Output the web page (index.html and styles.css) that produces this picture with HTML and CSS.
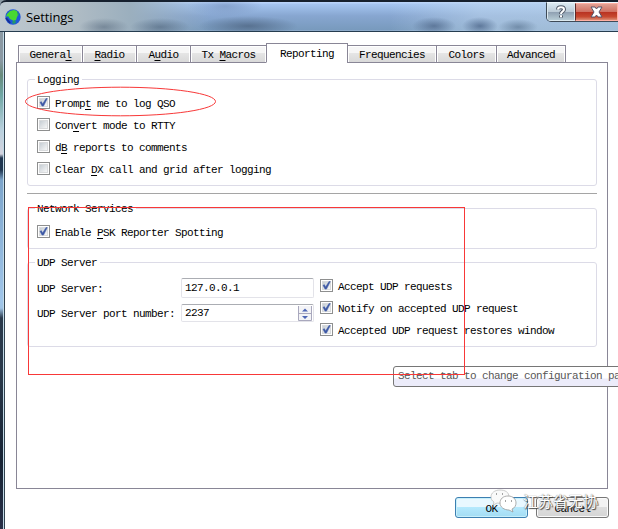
FILE: index.html
```html
<!DOCTYPE html>
<html lang="en">
<head>
<meta charset="utf-8">
<title>Settings</title>
<link rel="stylesheet" href="styles.css">
</head>
<body>
<svg class="defs" width="0" height="0" aria-hidden="true">
  <defs>
    <linearGradient id="fill" x1="0" y1="0" x2="1" y2="1"><stop offset="0" stop-color="#c3cbd2"/><stop offset="1" stop-color="#fafafa"/></linearGradient>
    <symbol id="box" viewBox="0 0 13 13"><rect x=".5" y=".5" width="12" height="12" fill="#fff" stroke="#8e8f8f"/><rect x="2.5" y="2.5" width="8" height="8" fill="url(#fill)" stroke="#d8dadc"/></symbol>
    <symbol id="checked" viewBox="0 0 13 13"><use href="#box"/><path d="M3 6.2l1.5-.5L5.6 8 9 2.5l1.3.1-3.8 7.5H5z" fill="#3d58a5" stroke="#3d58a5" stroke-width=".5"/></symbol>
  </defs>
</svg>
<div class="window">
  <header class="titlebar">
    <svg class="globe" width="16" height="16" viewBox="0 0 16 16"><circle cx="8" cy="8" r="7.7" fill="#2058d8"/><path d="M2 5l3-3 4-1 3 1 1 4-1 2-1 3-2 1-4-2-2-3-2 1z" fill="#48d832"/><path d="M12 2l2 3-1 2zM7 13l3-2 1 3-3 1z" fill="#239a69"/><path d="M1 9l4 5" stroke="#172e95" stroke-width="2"/></svg>
    <span class="title">Settings</span>
    <div class="controls">
      <span class="help"><svg width="12" height="14" viewBox="0 0 12 14"><path d="M3 4.5C3 1.5 9 1.5 9 4.5 9 6.5 6 6.500 6 9M6 10.500v2" fill="none" stroke="#515967" stroke-width="4"/><path d="M3 4.500C3 1.500 9 1.500 9 4.500 9 6.500 6 6.500 6 9M6 10.200v2" fill="none" stroke="#fff" stroke-width="2"/></svg></span>
      <span class="close"><svg width="13" height="12" viewBox="0 0 13 12"><path d="M1 1h4l1.500 2L8 1h4L9 6l3 5H8L6.500 9 5 11H1l3-5z" fill="#fff" stroke="#58556a"/></svg></span>
    </div>
  </header>
  <main class="client">
    <nav class="tabs">
      <span class="tab general">Genera<u>l</u></span><span class="tab radio"><u>R</u>adio</span><span class="tab audio">A<u>u</u>dio</span><span class="tab macros">Tx <u>M</u>acros</span><span class="tab active">Reporting</span><span class="tab freq">Frequencies</span><span class="tab colors">Colors</span><span class="tab advanced">Advanced</span>
    </nav>
    <section class="page">
      <div class="group logging">
        <span class="legend">Logging</span>
        <label class="check"><svg><use href="#checked"/></svg><span>Promp<u>t</u> me to log QSO</span></label>
        <label class="check"><svg><use href="#box"/></svg><span>Con<u>v</u>ert mode to RTTY</span></label>
        <label class="check"><svg><use href="#box"/></svg><span>d<u>B</u> reports to comments</span></label>
        <label class="check"><svg><use href="#box"/></svg><span>Clear <u>D</u>X call and grid after logging</span></label>
      </div>
      <hr>
      <div class="group network">
        <span class="legend">Network Services</span>
        <label class="check"><svg><use href="#checked"/></svg><span>Enable <u>P</u>SK Reporter Spotting</span></label>
      </div>
      <div class="group udp">
        <span class="legend">UDP Server</span>
        <div class="columns">
          <div class="form">
            <span>UDP Server:</span><div class="field">127.0.0.1</div>
            <span>UDP Server port number:</span>
            <div class="field spin">2237<svg width="14" height="15" viewBox="0 0 14 15"><path d="M.5 0v14.500h13V0M.5 7.500h13" fill="#f3f3f6" stroke="#a9a8bd"/><path d="M4 5.500h6L7 2.500zM4 10h6l-3 3z" fill="#4d65b4"/></svg></div>
          </div>
          <div class="options">
            <label class="check"><svg><use href="#checked"/></svg><span>Accept UDP requests</span></label>
            <label class="check"><svg><use href="#checked"/></svg><span>Notify on accepted UDP request</span></label>
            <label class="check"><svg><use href="#checked"/></svg><span>Accepted UDP request restores window</span></label>
          </div>
        </div>
      </div>
    </section>
    <footer class="buttons"><span class="button ok">OK</span><span class="button">Cancel</span></footer>
  </main>
  <div class="tooltip">Select tab to change configuration parameters</div>
  <svg class="marks" width="618" height="529" viewBox="0 0 618 529"><ellipse cx="120.500" cy="101.500" rx="95" ry="14.300"/><rect x="28.500" y="207.500" width="436" height="167"/></svg>
  <div class="watermark">
    <svg width="28" height="24" viewBox="0 0 28 24"><path d="M10 1C4.500 1 1 4 1 8c0 2 1 4 3 5l-1 3 4-2c7 1 12-1 12-6s-4-7-9-7z" fill="#fafafa" stroke="#b8b8b8" stroke-width=".7"/><path d="M18 7c-5 0-8 3-8 7s4 7 9 7l4 2-1-3c3-1 4-4 4-6 0-4-3-7-8-7z" fill="#fff" stroke="#999" stroke-width=".8"/><path d="M6 5h1M12 5h1M15 12h1M21 12h1" stroke="#888" stroke-width="1.500"/></svg>
    <span>江苏省无协</span>
  </div>
</div>
</body>
</html>
```
FILE: styles.css
```css
* { box-sizing: border-box; }
body { margin: 0; overflow: hidden; background: #fff; }
.defs { position: absolute; }
.window {
  position: relative;
  width: 618px;
  height: 529px;
  overflow: hidden;
  padding-left: 5px;
  background:
    linear-gradient(90deg, transparent 3px, #c1dae8 3px 4px, #30404d 4px 5px, transparent 5px) 0 32px / 5px 100% no-repeat,
    linear-gradient(#8b99a3 0 60px, #698b7c 75px, #70a7a4 95px, #b9d0dd 130px, #d4d4df 154px, #203650 158px 170px, #7da5cb 180px, #a0c5e9 300px, #9fc3e5 308px, #2b3a4b 318px 370px, #172334 460px, #293047) 0 0 / 5px 100% no-repeat,
    #fff;
  font: 11px/14px "Liberation Mono", monospace;
  letter-spacing: -.6px;
  color: #000;
}
u { text-decoration: underline; text-decoration-thickness: 1px; text-underline-offset: 2px; }
.titlebar {
  display: flex;
  height: 32px;
  margin-left: -5px;
  padding: 3px 0 0 5px;
  border-top: 2px solid #16202e;
  border-bottom: 1px solid #263d50;
  border-radius: 6px 0 0 0;
  background:
    radial-gradient(ellipse 25px 9px at 104px 25px, #596b7f99, transparent),
    radial-gradient(ellipse 30px 9px at 160px 25px, #43587188, transparent),
    radial-gradient(ellipse 50px 10px at 248px 24px, #40546f99, transparent),
    radial-gradient(ellipse 38px 10px at 225px 4px, #6a82ab77, transparent),
    radial-gradient(ellipse 22px 9px at 434px 24px, #3e557899, transparent),
    radial-gradient(ellipse 18px 9px at 480px 24px, #324b7199, transparent),
    radial-gradient(ellipse 20px 8px at 518px 25px, #536d8a99, transparent),
    linear-gradient(90deg, #bdc7cf, #b1bdc5 70px, #9bafbe 130px, transparent 210px),
    linear-gradient(90deg, transparent 390px, #c0d8ef88 480px, #bdd5ea99),
    linear-gradient(#b9d3fa 0 1px, #a5c5f1 2px, #87a6d0 14px, #789abd 28px, #a1bad5 29px);
}
.globe { flex: none; margin-top: 4px; }
.title { margin: 2px 0 0 5px; font: 13px/20px "Open Sans", "Noto Sans", sans-serif; letter-spacing: -.1px; }
.controls { display: flex; width: 73px; height: 20px; margin: -3px -1px 0 auto; border: 1px solid #3e4a57; border-top-color: #eff8ff; border-radius: 0 0 0 5px; overflow: hidden; }
.controls span { display: flex; align-items: center; justify-content: center; }
.help { width: 28px; background: linear-gradient(#d8e6ef, #bbcad6 48%, #8e9fb1 50%, #b6cbd4); border: 1px solid #dce9ef; }
.close { flex: 1; border: 1px solid #ffb0a4; border-left-color: #5d2929; background: linear-gradient(#e3a094, #cf7062 48%, #b83121 50%, #c74930 80%, #dc8c74); }
.client { height: 497px; padding: 11px 10px 0 11px; }
.tabs { display: flex; align-items: flex-end; height: 20px; margin: 0 0 -1px 2px; position: relative; }
.tab { height: 18px; padding-top: 2px; margin-right: -1px; text-align: center; border: 1px solid #898696; background: linear-gradient(#f6f6f6 0 45%, #e5e5e5 46%, #d9d9d9); box-shadow: inset 1px 1px #fff, inset -1px 0 #fff; }
.general { width: 65px; }
.radio, .audio { width: 55px; }
.macros { width: 77px; }
.tab.active { width: 82px; height: 20px; padding-top: 3px; background: #fff; border-bottom-color: #fff; }
.freq { width: 90px; }
.colors { width: 61px; }
.advanced { width: 70px; }
.page { height: 427px; width: 592px; padding: 16px 10px 0; border: 1px solid #898696; }
.group { position: relative; border: 1px solid #dcdbe7; border-radius: 3px; }
.legend { position: absolute; left: 7px; top: -7px; padding: 0 3px 0 2px; background: #fff; }
.check { display: flex; align-items: flex-start; gap: 5px; height: 22px; white-space: pre; }
.check svg { flex: none; width: 13px; height: 13px; }
.check span { padding-top: 1px; }
.logging { height: 107px; padding: 16px 9px 0; }
hr { height: 1px; margin: 7px 0 14px; border: 0; background: #a5a5a5; }
.network { height: 41px; padding: 16px 9px 0; }
.udp { height: 85px; margin-top: 13px; padding: 15px 9px 0; }
.columns { display: flex; gap: 6px; }
.form { display: grid; grid-template-columns: 144px 133px; grid-template-rows: 20px 18px; row-gap: 6px; align-items: center; }
.form > span { padding-top: 1px; }
.field { display: flex; align-items: center; height: 100%; padding-left: 3px; border: 1px solid #e3e3e9; border-top-color: #abadb3; border-radius: 2px; }
.spin { padding-right: 1px; }
.spin svg { margin-left: auto; }
.options { padding-top: 1px; }
.buttons { display: flex; justify-content: flex-end; gap: 8px; padding-top: 8px; margin-right: -1px; }
.button { width: 73px; height: 21px; padding-top: 4px; text-align: center; border: 1px solid #777; border-radius: 3px; background: linear-gradient(#f3f3f3 0 46%, #dedede 48%, #d5d5d5); box-shadow: inset 0 0 0 1px #fafafa; }
.button.ok { border-color: #3c7fb1; background: linear-gradient(#e9f8ff 0 46%, #b5e9fd 48%, #a3dcf3); box-shadow: inset 0 0 0 1px #c8f0fb; }
.tooltip { position: absolute; left: 393px; top: 366px; width: 245px; height: 21px; padding: 2px 4px; overflow: hidden; white-space: nowrap; color: #575757; border: 1px solid #767676; border-radius: 3px; background: linear-gradient(#fff 0 55%, #ececfa 65%); }
.marks { position: absolute; left: 0; top: 0; pointer-events: none; fill: none; stroke: #f83838; stroke-width: 1; }
.watermark { position: absolute; left: 490px; top: 489px; display: flex; align-items: flex-start; font: 15px/24px "Noto Sans CJK SC", sans-serif; letter-spacing: 0; color: #fff; text-shadow: 1px 1px 1px #444, 0 0 1px #555; }
.watermark span { margin-left: 5px; }
```
